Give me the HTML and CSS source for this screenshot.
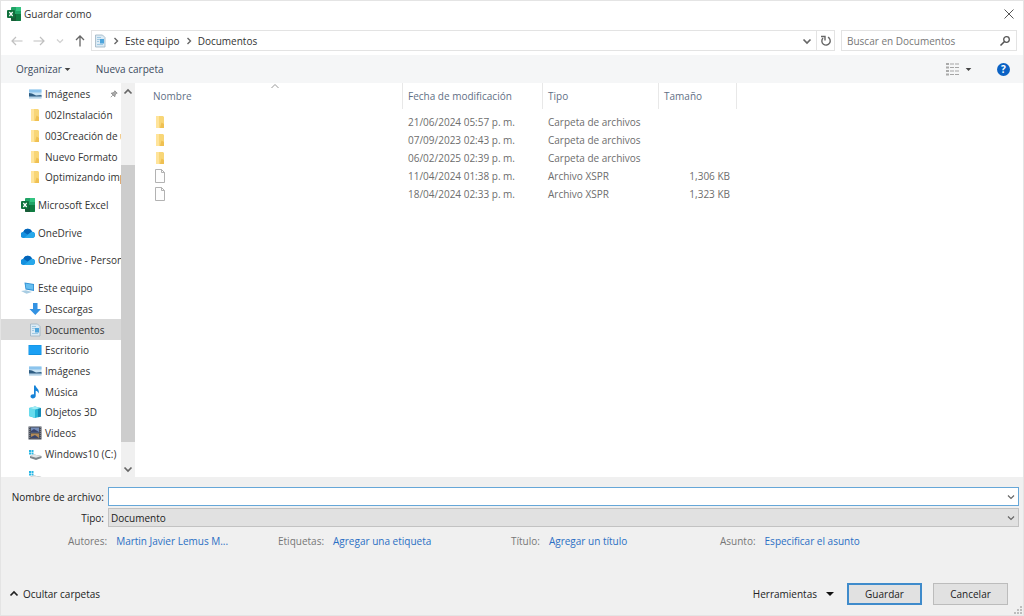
FILE: index.html
```html
<!DOCTYPE html>
<html lang="es">
<head>
<meta charset="utf-8">
<title>Guardar como</title>
<link rel="stylesheet" href="styles.css">
</head>
<body>
<svg class="sprite" aria-hidden="true">
  <symbol id="excel" viewBox="0 0 14 14">
    <rect x="4" width="10" height="14" rx="1" fill="#21a366"/><path d="M9 0h4a1 1 0 0 1 1 1v3H9z" fill="#33c481"/><path d="M4 7h5v7H5a1 1 0 0 1-1-1z" fill="#185c37"/><path d="M9 7h5v6a1 1 0 0 1-1 1H9z" fill="#107c41"/>
    <rect y="3" width="8" height="8" rx="1" fill="#0f703b"/><path d="M2.3 5l3.4 4M5.7 5L2.3 9" stroke="#fff" stroke-width="1.2"/>
  </symbol>
  <symbol id="folder" viewBox="0 0 14 14"><path d="M3 1h7l1 1v11H3z" fill="#f8d677"/><path d="M3 1h3v12H3z" fill="#ffe49b"/><path d="M8.500 7.500L11 9v4H7z" fill="#efc052"/></symbol>
  <symbol id="file" viewBox="0 0 14 14"><path d="M2.5.5h6l3 3v10h-9z" fill="#fdfdfd" stroke="#a9a9a9" stroke-width=".9"/><path d="M8.5.5v3h3" fill="none" stroke="#a9a9a9" stroke-width=".9"/></symbol>
  <symbol id="picture" viewBox="0 0 14 14"><path d="M1 2.5h12.5v9H1z" fill="#c9e4f5"/><path d="M1 2.5h12.5v3H1z" fill="#8cc4ed"/><path d="M1 6l3 .5 4 2 5.500-.5v2H1z" fill="#2e5d83"/><path d="M1 9.500h12.500v2H1z" fill="#b5d2e6"/></symbol>
  <symbol id="cloud" viewBox="0 0 14 14"><path d="M3 12A3.100 3.100 0 0 1 2.400 5.800 4.600 4.600 0 0 1 11 5.800a3.100 3.100 0 0 1 0 6.200z" fill="#1490df"/><path d="M2.400 5.800A4.600 4.600 0 0 1 11 5.800L6.500 8.500z" fill="#0364b8"/><path d="M3 12l7.500-6.200A3.100 3.100 0 0 1 11 12z" fill="#28a8ea"/></symbol>
  <symbol id="computer" viewBox="0 0 14 14"><path d="M3.500 1.500l9.500 1.500v7L4.500 8.500z" fill="#2f8fd3"/><path d="M4.500 2.500l7.700 1.300v5L5.200 7.500z" fill="#68bff0"/><path d="M0 10l5-.8 6 1.800-5.500 1.800z" fill="#a8cce2"/></symbol>
  <symbol id="download" viewBox="0 0 14 14"><path d="M5 1h4.500v6H13l-5.700 6L1.500 7H5z" fill="#3392e2"/></symbol>
  <symbol id="document" viewBox="0 0 14 14"><path d="M2.500 1h7l2.500 2.500V13H2.500z" fill="#dcebf5" stroke="#9db3c2" stroke-width=".8"/><path d="M4 3.500h4M4 5.500h3M4 7.500h2M4 10.500h6" stroke="#8fc0de" stroke-width=".8"/><path d="M7 5h4v4.500H7z" fill="#4ea5dc"/></symbol>
  <symbol id="desktop" viewBox="0 0 14 14"><path d="M.5 2h13v10H.5z" fill="#1190e0"/><path d="M1 2.500h12v8.500H1z" fill="#1ba0f4"/></symbol>
  <symbol id="music" viewBox="0 0 14 14"><path d="M6 .5h1.500C8 3.500 12 4 10.500 8.500 10 6.500 9 6 7.700 5.800V11c0 3-5.200 3.200-5.200.6C2.500 9.800 4.500 9 6 9.500z" fill="#1683d8"/></symbol>
  <symbol id="cube" viewBox="0 0 14 14"><path d="M1 3l6-1.500L13 3v8.500L7 13l-6-2z" fill="#25b5d4"/><path d="M1 3l6 1.500V13l-6-2z" fill="#67dced"/><path d="M1 3l6-1.500L13 3 7 4.500z" fill="#a0edf5"/><path d="M10 4l3-1v8.500l-3 .8z" fill="#1589b5"/></symbol>
  <symbol id="video" viewBox="0 0 14 14"><path d="M.5.5h13v13H.5z" fill="#474d59"/><path d="M3 1.500h8v5H3z" fill="#758db9"/><path d="M3 7.500h8v5H3z" fill="#b28a58"/><path d="M3 5l3-2 5 3v.5H3zM3 11l4-2 4 3v.5H3z" fill="#39456d"/><path d="M1.700 1v12M12.300 1v12" stroke="#8b8e96" stroke-dasharray="1 1"/></symbol>
  <symbol id="drive" viewBox="0 0 14 14"><path d="M1 3h2v2H1zM3.500 3h2v2h-2zM1 5.500h2v2H1zM3.500 5.500h2v2h-2z" fill="#27b7e5"/><path d="M2 9l4-1.500L13.500 9v2L8 13 2 11z" fill="#7f868b"/><path d="M2 9l4-1.500L13.500 9 8 10.700z" fill="#e0e4e6"/></symbol>
  <symbol id="down" viewBox="0 0 10 10"><path d="M2 3.500l3 3 3-3" fill="none" stroke="currentColor" stroke-width="1.200"/></symbol>
  <symbol id="down-bold" viewBox="0 0 10 10"><path d="M1.500 3.500L5 7l3.500-3.500" fill="none" stroke="currentColor" stroke-width="1.700"/></symbol>
  <symbol id="up" viewBox="0 0 10 10"><path d="M1.500 6.500L5 3l3.500 3.500" fill="none" stroke="currentColor" stroke-width="1.700"/></symbol>
  <symbol id="right" viewBox="0 0 10 10"><path d="M3.500 2l3 3-3 3" fill="none" stroke="currentColor" stroke-width="1.400"/></symbol>
  <symbol id="caret" viewBox="0 0 10 10"><path d="M1 3h8L5 7z" fill="currentColor"/></symbol>
  <symbol id="arrow" viewBox="0 0 14 14"><path d="M12.500 7H2M6 3L2 7l4 4" fill="none" stroke="currentColor" stroke-width="1.200"/></symbol>
</svg>

<header class="titlebar">
  <svg class="icon"><use href="#excel"/></svg>
  <h1 class="title">Guardar como</h1>
  <button class="plain close" aria-label="Cerrar"><svg class="icon-small" viewBox="0 0 12 12"><path d="M1.500 1.500l9 9M10.500 1.500l-9 9" stroke="#555" fill="none"/></svg></button>
</header>

<div class="location">
  <div class="history">
    <button class="plain faded" aria-label="Atrás"><svg class="icon"><use href="#arrow"/></svg></button>
    <button class="plain faded flip" aria-label="Adelante"><svg class="icon"><use href="#arrow"/></svg></button>
    <button class="plain faded" aria-label="Ubicaciones recientes"><svg class="chevron"><use href="#down"/></svg></button>
    <button class="plain" aria-label="Subir"><svg class="icon" viewBox="0 0 14 14"><path d="M7 12.500V2M3 6l4-4 4 4" fill="none" stroke="#666" stroke-width="1.300"/></svg></button>
  </div>
  <nav class="address" aria-label="Dirección">
    <svg class="icon"><use href="#document"/></svg>
    <svg class="chevron"><use href="#right"/></svg>
    <a href="#">Este equipo</a>
    <svg class="chevron"><use href="#right"/></svg>
    <a href="#">Documentos</a>
    <button class="plain history-menu" aria-label="Ubicaciones anteriores"><svg class="chevron"><use href="#down-bold"/></svg></button>
    <button class="plain refresh" aria-label="Actualizar"><svg class="icon-small" viewBox="0 0 12 12"><path d="M8 2.200A4.200 4.200 0 1 1 3 3" fill="none" stroke="#666" stroke-width="1.400"/><path d="M1 1.500h4v4" fill="none" stroke="#666" stroke-width="1.400"/></svg></button>
  </nav>
  <form class="search">
    <input type="search" aria-label="Buscar en Documentos" placeholder="Buscar en Documentos">
    <button class="plain" type="button" aria-label="Buscar"><svg class="icon-small" viewBox="0 0 12 12"><circle cx="7.500" cy="4.500" r="2.800" fill="none" stroke="#555" stroke-width="1.300"/><path d="M5.500 6.500l-4 4" stroke="#555" stroke-width="1.600"/></svg></button>
  </form>
</div>

<div class="toolbar">
  <button class="plain organize">Organizar <svg class="caret"><use href="#caret"/></svg></button>
  <button class="plain">Nueva carpeta</button>
  <button class="plain view" aria-label="Cambiar la vista"><svg class="icon" viewBox="0 0 14 14"><path d="M1 2h3M1 5.500h3M1 9h3M1 12.500h3" stroke="#aaa" stroke-width="2"/><path d="M5 2h4M10 2h4M5 5.500h4M10 5.500h4M5 9h4M10 9h4M5 12.500h4M10 12.500h4" stroke="#a5a5a5"/></svg><svg class="caret"><use href="#caret"/></svg></button>
  <button class="help" aria-label="Ayuda">?</button>
</div>

<main class="browser">
  <nav class="sidebar" aria-label="Carpetas">
    <div class="tree">
      <a class="node child" href="#"><svg class="icon"><use href="#picture"/></svg><span>Imágenes</span><svg class="pin" viewBox="0 0 10 10"><path d="M6 1l3 3-1 .5L6.500 6 6 8.500 1.500 4 4 3.500 5.500 2zM3.500 6.500L1 9" fill="#aaa" stroke="#888"/></svg></a>
      <a class="node child" href="#"><svg class="icon"><use href="#folder"/></svg><span>002Instalación</span></a>
      <a class="node child" href="#"><svg class="icon"><use href="#folder"/></svg><span>003Creación de u</span></a>
      <a class="node child" href="#"><svg class="icon"><use href="#folder"/></svg><span>Nuevo Formato</span></a>
      <a class="node child" href="#"><svg class="icon"><use href="#folder"/></svg><span>Optimizando imp</span></a>
      <div class="space"></div>
      <a class="node" href="#"><svg class="icon"><use href="#excel"/></svg><span>Microsoft Excel</span></a>
      <div class="space"></div>
      <a class="node" href="#"><svg class="icon"><use href="#cloud"/></svg><span>OneDrive</span></a>
      <div class="space"></div>
      <a class="node" href="#"><svg class="icon"><use href="#cloud"/></svg><span>OneDrive - Person</span></a>
      <div class="space"></div>
      <a class="node" href="#"><svg class="icon"><use href="#computer"/></svg><span>Este equipo</span></a>
      <a class="node child" href="#"><svg class="icon"><use href="#download"/></svg><span>Descargas</span></a>
      <a class="node child selected" href="#" aria-current="true"><svg class="icon"><use href="#document"/></svg><span>Documentos</span></a>
      <a class="node child" href="#"><svg class="icon"><use href="#desktop"/></svg><span>Escritorio</span></a>
      <a class="node child" href="#"><svg class="icon"><use href="#picture"/></svg><span>Imágenes</span></a>
      <a class="node child" href="#"><svg class="icon"><use href="#music"/></svg><span>Música</span></a>
      <a class="node child" href="#"><svg class="icon"><use href="#cube"/></svg><span>Objetos 3D</span></a>
      <a class="node child" href="#"><svg class="icon"><use href="#video"/></svg><span>Videos</span></a>
      <a class="node child" href="#"><svg class="icon"><use href="#drive"/></svg><span>Windows10 (C:)</span></a>
      <a class="node child last" href="#" aria-label="Unidad"><svg class="icon"><use href="#drive"/></svg></a>
    </div>
    <div class="scrollbar">
      <button class="plain" aria-label="Desplazar arriba"><svg class="chevron"><use href="#up"/></svg></button>
      <div class="track"><div class="thumb"></div></div>
      <button class="plain" aria-label="Desplazar abajo"><svg class="chevron"><use href="#down-bold"/></svg></button>
    </div>
  </nav>
  <section class="files">
    <table>
      <colgroup><col class="c-name"><col class="c-date"><col class="c-type"><col class="c-size"></colgroup>
      <thead><tr><th>Nombre<svg class="sort" viewBox="0 0 10 6"><path d="M1.500 5L5 1.500 8.500 5" fill="none" stroke="#999"/></svg></th><th>Fecha de modificación</th><th>Tipo</th><th>Tamaño</th></tr></thead>
      <tbody>
        <tr><td><svg class="icon"><use href="#folder"/></svg></td><td>21/06/2024 05:57 p. m.</td><td>Carpeta de archivos</td><td></td></tr>
        <tr><td><svg class="icon"><use href="#folder"/></svg></td><td>07/09/2023 02:43 p. m.</td><td>Carpeta de archivos</td><td></td></tr>
        <tr><td><svg class="icon"><use href="#folder"/></svg></td><td>06/02/2025 02:39 p. m.</td><td>Carpeta de archivos</td><td></td></tr>
        <tr><td><svg class="icon"><use href="#file"/></svg></td><td>11/04/2024 01:38 p. m.</td><td>Archivo XSPR</td><td>1,306 KB</td></tr>
        <tr><td><svg class="icon"><use href="#file"/></svg></td><td>18/04/2024 02:33 p. m.</td><td>Archivo XSPR</td><td>1,323 KB</td></tr>
      </tbody>
    </table>
  </section>
</main>

<footer class="details">
  <div class="fields">
    <label for="name">Nombre de archivo:</label>
    <div class="combo"><input id="name" class="control name" type="text"><svg class="chevron"><use href="#down"/></svg></div>
    <label for="type">Tipo:</label>
    <div class="combo"><select id="type" class="control type"><option>Documento</option></select><svg class="chevron"><use href="#down"/></svg></div>
  </div>
  <dl class="meta">
    <div><dt>Autores:</dt><dd><a href="#">Martin Javier Lemus M...</a></dd></div>
    <div><dt>Etiquetas:</dt><dd><a href="#">Agregar una etiqueta</a></dd></div>
    <div><dt>Título:</dt><dd><a href="#">Agregar un título</a></dd></div>
    <div><dt>Asunto:</dt><dd><a href="#">Especificar el asunto</a></dd></div>
  </dl>
  <div class="actions">
    <button class="plain hide"><svg class="chevron"><use href="#up"/></svg>Ocultar carpetas</button>
    <button class="plain tools">Herramientas <svg class="caret big"><use href="#caret"/></svg></button>
    <button class="push primary">Guardar</button>
    <button class="push">Cancelar</button>
  </div>
  <svg class="grip" viewBox="0 0 8 8"><path d="M6 0h2v2H6zM3 3h2v2H3zM6 3h2v2H6zM0 6h2v2H0zM3 6h2v2H3zM6 6h2v2H6z" fill="#bdbdbd"/></svg>
</footer>
</body>
</html>
```
FILE: styles.css
```css
* { box-sizing: border-box; }

body {
  margin: 0;
  height: 100vh;
  display: flex;
  flex-direction: column;
  overflow: hidden;
  border: 1px solid #e4e4e4;
  background: #fff;
  color: #333;
  font: 10px/16px "Open Sans", "Noto Sans", sans-serif;
}

button, input, select { font: inherit; color: inherit; }
a { color: inherit; text-decoration: none; }
svg { display: block; flex: none; }

.sprite { position: absolute; width: 0; height: 0; }
.icon { width: 14px; height: 14px; }
.icon-small { width: 12px; height: 12px; }
.chevron { width: 10px; height: 10px; color: #666; }
.caret { width: 7px; height: 7px; color: #444; }
.caret.big { width: 10px; height: 10px; color: #111; }

.plain {
  display: flex;
  align-items: center;
  padding: 0;
  border: 0;
  background: none;
}

.titlebar {
  display: flex;
  align-items: center;
  gap: 3px;
  height: 25px;
  flex: none;
  padding: 0 8px 0 6px;
}
.title { margin: 0; font-size: 10px; font-weight: 400; }
.close { margin-left: auto; }

.location {
  display: flex;
  align-items: center;
  flex: none;
  height: 29px;
  padding-right: 6px;
}
.history {
  display: flex;
  align-items: center;
  justify-content: space-between;
  width: 90px;
  padding: 0 4px 0 9px;
}
.faded { opacity: .3; }
.flip { transform: scaleX(-1); }
.address, .search {
  display: flex;
  align-items: center;
  height: 21px;
  border: 1px solid #e3e3e3;
}
.address { flex: 1; gap: 4px; padding-left: 1px; }
.history-menu { margin-left: auto; }
.refresh { align-self: stretch; justify-content: center; width: 18px; border-left: 1px solid #e3e3e3; }
.search { width: 176px; padding: 0 5px; margin-left: 6px; }
.search input {
  flex: 1;
  min-width: 0;
  padding: 0;
  border: 0;
  outline: 0;
  background: none;
  appearance: none;
}
.search input::placeholder { color: #777; opacity: 1; }

.toolbar {
  display: flex;
  align-items: center;
  flex: none;
  height: 28px;
  padding: 0 13px 0 15px;
  background: #f5f6f7;
  color: #3d4b60;
}
.organize { gap: 2px; margin-right: 25px; }
.view { gap: 6px; margin-left: auto; }
.help {
  width: 13px;
  height: 13px;
  margin-left: 25px;
  padding: 0;
  border: 0;
  border-radius: 50%;
  background: #0b62c4;
  color: #fff;
  font-weight: 700;
  line-height: 13px;
}

.browser { display: flex; flex: 1; min-height: 0; }
.sidebar { display: flex; width: 134px; overflow: hidden; }
.tree { display: flex; flex: 1; flex-direction: column; min-width: 0; padding-top: 1px; margin-bottom: -8px; }
.node {
  display: flex;
  align-items: center;
  gap: 3px;
  flex: 1;
  min-height: 0;
  padding-left: 20px;
  overflow: hidden;
  white-space: nowrap;
}
.node.child { padding-left: 27px; }
.node.selected { background: #d9d9d9; }
.space { height: 7px; flex: none; }
.pin { width: 8px; height: 8px; margin-left: auto; margin-right: 3px; }
.scrollbar { display: flex; flex-direction: column; width: 14px; background: #f0f0f0; }
.scrollbar .plain { justify-content: center; height: 17px; }
.track { display: flex; flex: 1; flex-direction: column; justify-content: flex-end; padding-bottom: 18px; }
.thumb { height: 81%; background: #cdcdcd; }

.files { flex: 1; min-width: 0; padding-left: 13px; color: #6d6d6d; }
table { width: 589px; table-layout: fixed; border-collapse: separate; border-spacing: 0; }
.c-name { width: 255px; }
.c-date { width: 140px; }
.c-type { width: 116px; }
th {
  height: 26px;
  padding: 0 5px;
  border-right: 1px solid #e8e8e8;
  color: #5f6f85;
  font-weight: 400;
  text-align: left;
}
th:first-child { position: relative; }
.sort { position: absolute; left: 122px; top: 0; width: 10px; height: 6px; }
td { height: 18px; padding: 0 5px; white-space: nowrap; }
td:last-child { padding-right: 7px; text-align: right; }
tbody::before { content: ""; display: block; height: 4px; }

.details {
  position: relative;
  display: flex;
  flex-direction: column;
  flex: none;
  padding: 10px 4px 10px 8px;
  background: #f0f0f0;
}
.fields {
  display: grid;
  grid-template-columns: 95px 1fr;
  align-items: center;
  gap: 2px 4px;
  text-align: right;
  white-space: nowrap;
  color: #222;
}
.combo { position: relative; display: flex; }
.combo .chevron { position: absolute; right: 3px; top: 5px; pointer-events: none; }
.control {
  width: 100%;
  height: 19px;
  padding: 0 2px;
  border: 1px solid #c2c2c2;
  border-radius: 0;
  outline: 0;
  appearance: none;
}
.control.name { border-color: #66a7d8; background: #fff; }
.control.type { background: #e1e1e1; }

.meta { display: grid; grid-template-columns: 210px 233px 209px 1fr; margin: 6px 0 0; padding-left: 59px; }
.meta div { display: flex; gap: 9px; }
.meta dt { color: #777; }
.meta dd { margin: 0; color: #2a6fc4; }

.actions { display: flex; align-items: center; margin-top: 34px; padding-right: 11px; color: #222; }
.hide { gap: 4px; margin-right: auto; }
.hide .chevron { color: #222; }
.tools { gap: 8px; margin-right: 12px; }
.push {
  width: 75px;
  height: 22px;
  padding: 0;
  border: 1px solid #bcbcbc;
  background: #e1e1e1;
}
.push.primary { margin-right: 11px; border: 2px solid #3f8bcb; }
.grip { position: absolute; right: 1px; bottom: 1px; width: 8px; height: 8px; }
```
